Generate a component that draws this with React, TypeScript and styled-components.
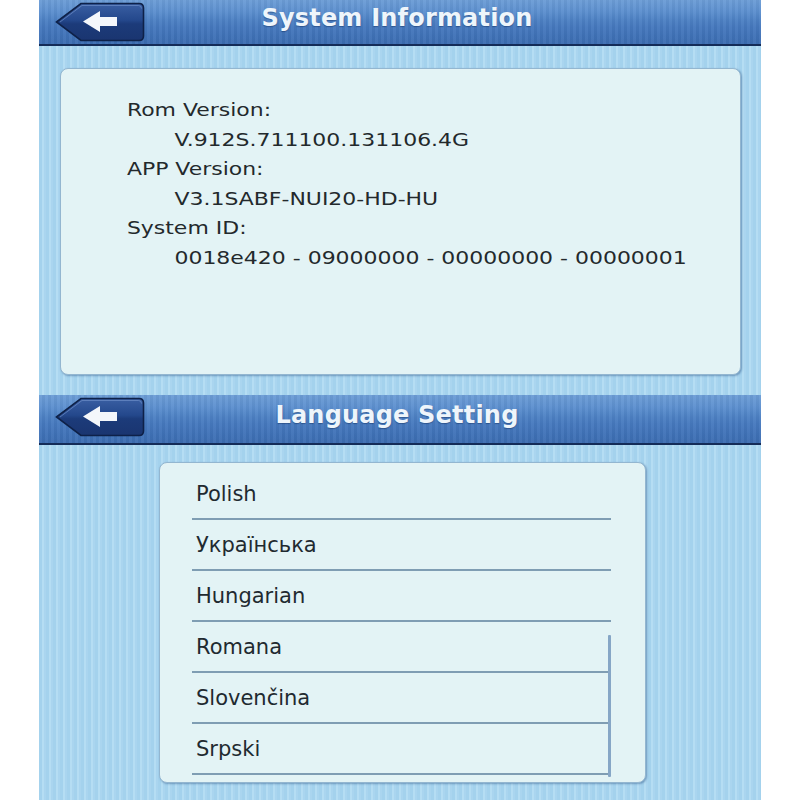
import React, { FunctionComponent } from 'react'
import styled, { createGlobalStyle } from 'styled-components'

const GlobalStyle = createGlobalStyle`
html, body {
    margin: 0;
    padding: 0;
    background: #ffffff;
}
`

const Page = styled.div`
display: flex;
flex-flow: column nowrap;
width: 800px;
height: 800px;
padding: 0 39px;
box-sizing: border-box;
overflow: hidden;
font-family: 'DejaVu Sans', Verdana, sans-serif;
`

const Screen = styled.div<{ $height: number }>`
display: flex;
flex-flow: column nowrap;
width: 722px;
height: ${p => p.$height}px;
flex-shrink: 0;
`

const Header = styled.div<{ $height: number }>`
position: relative;
display: flex;
align-items: center;
justify-content: center;
height: ${p => p.$height}px;
flex-shrink: 0;
background:
    repeating-linear-gradient(90deg, rgba(255,255,255,0.04) 0 3px, rgba(0,0,0,0.03) 3px 6px),
    linear-gradient(180deg, #6c9dd6 0%, #5d90cf 25%, #4d81c4 45%, #4679be 60%, #3f71b6 85%, #3c6cb1 100%);
border-bottom: 2px solid #142c58;
`

const Titre = styled.div`
font-size: 24px;
font-weight: bold;
color: #eef5fb;
letter-spacing: 0.2px;
padding-bottom: 8px;
padding-right: 6px;
text-shadow: 0 1px 1px rgba(20, 50, 100, 0.5);
`

const BoutonRetour = styled.div`
position: absolute;
left: 16px;
top: 2px;
width: 90px;
height: 40px;
`

const Corps = styled.div<{ $paddingTop: number; $paddingLeft: number }>`
flex: 1;
display: flex;
flex-flow: column nowrap;
padding: ${p => p.$paddingTop}px 0 0 ${p => p.$paddingLeft}px;
box-sizing: border-box;
background: repeating-linear-gradient(90deg, #a4d2ed 0 3px, #b5ddf3 3px 5px, #aad5ef 5px 7px);
`

const Carte = styled.div<{ $width: number; $height: number }>`
position: relative;
width: ${p => p.$width}px;
height: ${p => p.$height}px;
box-sizing: border-box;
background: #e3f3f5;
border: 1px solid #93b6d0;
border-radius: 8px;
box-shadow: 1px 1px 2px rgba(40, 80, 130, 0.45);
`

// the text on the device is drawn wider than the font, hence the scaleX
const InfoBloc = styled.div`
display: flex;
flex-flow: column nowrap;
padding: 26px 0 0 54px;
font-size: 18px;
line-height: 29.5px;
color: #23292c;
transform: scaleX(1.22);
transform-origin: left top;
`

const InfoLigne = styled.div<{ $indent?: boolean }>`
padding-left: ${p => (p.$indent ? 39 : 0)}px;
white-space: nowrap;
`

const Liste = styled.div`
display: flex;
flex-flow: column nowrap;
padding: 6px 34px 0 32px;
`

const LigneLangue = styled.div`
display: flex;
align-items: center;
height: 51px;
box-sizing: border-box;
padding: 0 0 0 4px;
border-bottom: 2px solid #7f9db3;
font-size: 21px;
color: #1f2a30;
`

const Ascenseur = styled.div`
position: absolute;
left: 448px;
top: 172px;
width: 3px;
height: 142px;
border-radius: 1px;
background: #86a6c6;
`

const Retour: FunctionComponent<{ id: string }> = ({ id }) => (
    <BoutonRetour>
        <svg width="90" height="40" viewBox="0 0 90 40">
            <defs>
                <linearGradient id={id} x1="0" y1="0" x2="0" y2="1">
                    <stop offset="0" stopColor="#3a5fa3" />
                    <stop offset="0.45" stopColor="#24488c" />
                    <stop offset="0.55" stopColor="#1c3b7a" />
                    <stop offset="1" stopColor="#1a3570" />
                </linearGradient>
            </defs>
            <path d="M1.5 20 L26 1.5 H84 Q88.5 1.5 88.5 6 V34 Q88.5 38.5 84 38.5 H26 Z"
                fill={`url(#${id})`} stroke="#0e2148" strokeWidth="1.6" />
            <path d="M5 20 L27 3.5 H83.5 Q86.5 3.5 86.5 6.5" fill="none" stroke="#6d8fc8" strokeWidth="1" opacity="0.7" />
            <path d="M28 19.5 L45 9 V15 H62 V24 H45 V30 Z" fill="#f4f7fb" />
        </svg>
    </BoutonRetour>
)

const infos = [
    { label: 'Rom Version:', valeur: 'V.912S.711100.131106.4G' },
    { label: 'APP Version:', valeur: 'V3.1SABF-NUI20-HD-HU' },
    { label: 'System ID:', valeur: '0018e420 - 09000000 - 00000000 - 00000001' },
]

const langues = ['Polish', 'Українська', 'Hungarian', 'Romana', 'Slovenčina', 'Srpski']

const App: FunctionComponent = () => {
    return (
        <>
            <GlobalStyle />
            <Page>
                <Screen $height={395}>
                    <Header $height={44}>
                        <Retour id="retour-haut" />
                        <Titre>System Information</Titre>
                    </Header>
                    <Corps $paddingTop={22} $paddingLeft={21}>
                        <Carte $width={681} $height={307}>
                            <InfoBloc>
                                {infos.map(info => (
                                    <React.Fragment key={info.label}>
                                        <InfoLigne>{info.label}</InfoLigne>
                                        <InfoLigne $indent>{info.valeur}</InfoLigne>
                                    </React.Fragment>
                                ))}
                            </InfoBloc>
                        </Carte>
                    </Corps>
                </Screen>
                <Screen $height={405}>
                    <Header $height={48}>
                        <Retour id="retour-bas" />
                        <Titre>Language Setting</Titre>
                    </Header>
                    <Corps $paddingTop={17} $paddingLeft={120}>
                        <Carte $width={487} $height={321}>
                            <Liste>
                                {langues.map(langue => (
                                    <LigneLangue key={langue}>{langue}</LigneLangue>
                                ))}
                            </Liste>
                            <Ascenseur />
                        </Carte>
                    </Corps>
                </Screen>
            </Page>
        </>
    )
}

export default App
